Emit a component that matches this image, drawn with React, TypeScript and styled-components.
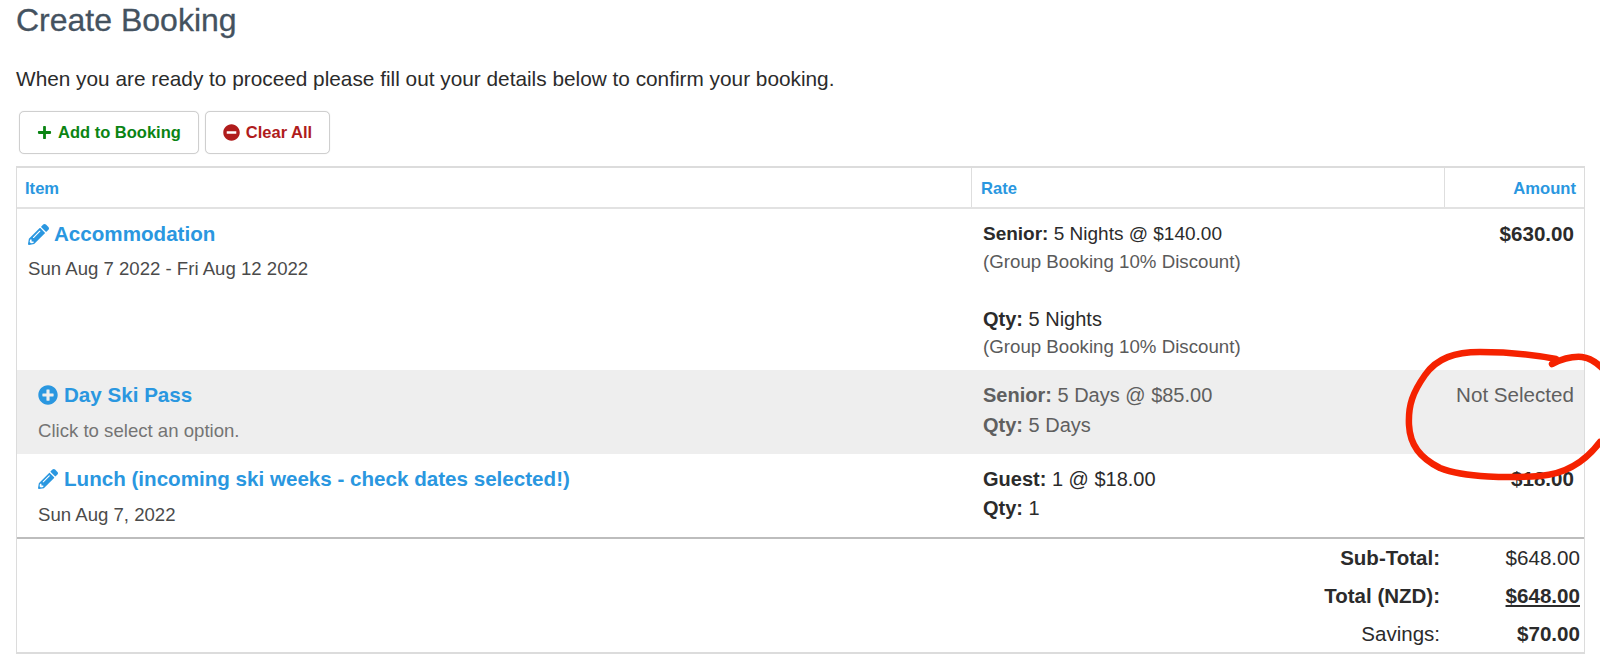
import React from 'react';
import styled, { createGlobalStyle } from 'styled-components';
import { FaPencilAlt, FaPlus, FaPlusCircle, FaMinusCircle } from 'react-icons/fa';

const GlobalStyle = createGlobalStyle`
    html, body {
        margin:0;
        padding:0;
        background:#fff;
        overflow:hidden;
    }
    body {
        font-family:"Liberation Sans", Arial, sans-serif;
        color:#2b2b2b;
    }
`;

function App() {
    return (
        <Page>
            <GlobalStyle />
            <Title>Create Booking</Title>
            <Intro>When you are ready to proceed please fill out your details below to confirm your booking.</Intro>
            <Actions>
                <ActionButton $color="#0b8413">
                    <FaPlus size={15} />
                    Add to Booking
                </ActionButton>
                <ActionButton $color="#b01c1c">
                    <FaMinusCircle size={17} />
                    Clear All
                </ActionButton>
            </Actions>
            <Table>
                <HeaderRow>
                    <HeadCell>Item</HeadCell>
                    <HeadCell>Rate</HeadCell>
                    <HeadCell $right>Amount</HeadCell>
                </HeaderRow>

                <Row $height={161} $inset={11}>
                    <ItemCell>
                        <ItemName $gap={5}>
                            <FaPencilAlt size={21} />
                            Accommodation
                        </ItemName>
                        <ItemNote $top={14}>Sun Aug 7 2022 - Fri Aug 12 2022</ItemNote>
                    </ItemCell>
                    <RateCell>
                        <RateLine $size={19}><b>Senior:</b> 5 Nights @ $140.00</RateLine>
                        <Discount>(Group Booking 10% Discount)</Discount>
                        <RateLine $top={36}><b>Qty:</b> 5 Nights</RateLine>
                        <Discount>(Group Booking 10% Discount)</Discount>
                    </RateCell>
                    <AmountCell><b>$630.00</b></AmountCell>
                </Row>

                <Row $height={84} $inset={21} $muted>
                    <ItemCell>
                        <ItemName>
                            <FaPlusCircle size={20} />
                            Day Ski Pass
                        </ItemName>
                        <ItemNote>Click to select an option.</ItemNote>
                    </ItemCell>
                    <RateCell>
                        <RateLine><b>Senior:</b> 5 Days @ $85.00</RateLine>
                        <RateLine $top={8}><b>Qty:</b> 5 Days</RateLine>
                    </RateCell>
                    <AmountCell>Not Selected</AmountCell>
                </Row>

                <Row $height={83} $inset={21}>
                    <ItemCell>
                        <ItemName>
                            <FaPencilAlt size={20} />
                            Lunch (incoming ski weeks - check dates selected!)
                        </ItemName>
                        <ItemNote>Sun Aug 7, 2022</ItemNote>
                    </ItemCell>
                    <RateCell>
                        <RateLine><b>Guest:</b> 1 @ $18.00</RateLine>
                        <RateLine $top={7}><b>Qty:</b> 1</RateLine>
                    </RateCell>
                    <AmountCell><b>$18.00</b></AmountCell>
                </Row>

                <Totals>
                    <TotalLabel $bold>Sub-Total:</TotalLabel>
                    <TotalValue>$648.00</TotalValue>
                    <TotalLabel $bold>Total (NZD):</TotalLabel>
                    <TotalValue $bold $underline>$648.00</TotalValue>
                    <TotalLabel>Savings:</TotalLabel>
                    <TotalValue $bold>$70.00</TotalValue>
                </Totals>
            </Table>

            <Scribble viewBox="0 0 1600 664" aria-hidden="true">
                <path d="M1556 359 C1530 354 1505 352 1480 352 C1455 352 1437 358 1425 375 C1413 392 1408 405 1409 425 C1410 445 1420 458 1440 468 C1465 478 1510 478 1540 476 C1565 474 1585 462 1600 442" />
                <path d="M1552 364 C1560 360 1570 356 1582 357 C1590 358 1596 362 1602 368" />
            </Scribble>
        </Page>
    );
}

const Page = styled.div`
    position:relative;
    width:1600px;
    height:664px;
    padding:0 15px 0 16px;
    box-sizing:border-box;
    overflow:hidden;
`;
const Title = styled.h1`
    margin:0;
    padding-top:4px;
    font-size:32px;
    line-height:33px;
    font-weight:400;
    color:#44525f;
    -webkit-text-stroke:0.3px #44525f;
`;
const Intro = styled.p`
    margin:30px 0 0;
    font-size:20.8px;
    line-height:24px;
    color:#2b2b2b;
`;
const Actions = styled.div`
    display:flex;
    gap:6px;
    margin:20px 0 12px 3px;
`;
const ActionButton = styled.button<{ $color: string }>`
    display:flex;
    align-items:center;
    justify-content:center;
    gap:6px;
    height:43px;
    padding:0 17px;
    background:#fff;
    border:1px solid #cfcfcf;
    border-radius:5px;
    box-shadow:0 0 1px #d8d8d8;
    font-family:inherit;
    font-size:16.5px;
    font-weight:700;
    color:${p => p.$color};
`;
const Table = styled.div`
    display:flex;
    flex-direction:column;
    border:1px solid #dcdcdc;
    border-top-width:2px;
    border-bottom-width:2px;
    height:488px;
    box-sizing:border-box;
`;
const HeaderRow = styled.div`
    display:grid;
    grid-template-columns:954px 473px 1fr;
    flex-shrink:0;
    height:39px;
    border-bottom:2px solid #e2e2e2;
    box-sizing:content-box;
`;
const HeadCell = styled.div<{ $right?: boolean }>`
    display:flex;
    align-items:center;
    justify-content:${p => (p.$right ? 'flex-end' : 'flex-start')};
    padding:2px 8px 0;
    font-size:16.6px;
    font-weight:700;
    color:#2a97e0;
    & + & {
        padding-left:9px;
        border-left:1px solid #dedede;
    }
`;
const Row = styled.div<{ $height: number; $inset: number; $muted?: boolean }>`
    display:grid;
    grid-template-columns:954px 473px 1fr;
    height:${p => p.$height}px;
    box-sizing:border-box;
    padding-top:14px;
    flex-shrink:0;
    background:${p => (p.$muted ? '#eeeeee' : '#fff')};
    color:${p => (p.$muted ? '#5f5f5f' : '#2b2b2b')};
    > div:first-child {
        padding-left:${p => p.$inset}px;
    }
`;
const ItemCell = styled.div`
    display:flex;
    flex-direction:column;
`;
const ItemName = styled.div<{ $gap?: number }>`
    display:flex;
    align-items:center;
    gap:${p => p.$gap ?? 6}px;
    height:22px;
    font-size:20.6px;
    font-weight:700;
    white-space:nowrap;
    color:#2a97e0;
`;
const ItemNote = styled.div<{ $top?: number }>`
    margin-top:${p => p.$top ?? 15}px;
    font-size:18.6px;
    line-height:20px;
    opacity:0.85;
`;
const RateCell = styled.div`
    padding-left:12px;
`;
const RateLine = styled.div<{ $top?: number; $size?: number }>`
    margin-top:${p => p.$top ?? 0}px;
    font-size:${p => p.$size ?? 20}px;
    line-height:22px;
`;
const Discount = styled.div`
    margin-top:7px;
    font-size:18.7px;
    line-height:20px;
    color:#5a5a5a;
`;
const AmountCell = styled.div`
    padding-right:10px;
    text-align:right;
    font-size:20.6px;
    line-height:22px;
`;
const Totals = styled.div`
    flex:1;
    display:grid;
    grid-template-columns:1fr 144px;
    grid-auto-rows:38px;
    align-items:center;
    border-top:2px solid #bdbdbd;
`;
const TotalLabel = styled.div<{ $bold?: boolean }>`
    text-align:right;
    font-size:20.5px;
    font-weight:${p => (p.$bold ? 700 : 400)};
`;
const TotalValue = styled.div<{ $bold?: boolean; $underline?: boolean }>`
    padding-right:4px;
    text-align:right;
    font-size:20.6px;
    font-weight:${p => (p.$bold ? 700 : 400)};
    text-decoration:${p => (p.$underline ? 'underline' : 'none')};
`;
const Scribble = styled.svg`
    position:absolute;
    top:0;
    left:0;
    width:1600px;
    height:664px;
    pointer-events:none;
    fill:none;
    stroke:#f52200;
    stroke-width:6.5;
    stroke-linecap:round;
`;

export default App;
